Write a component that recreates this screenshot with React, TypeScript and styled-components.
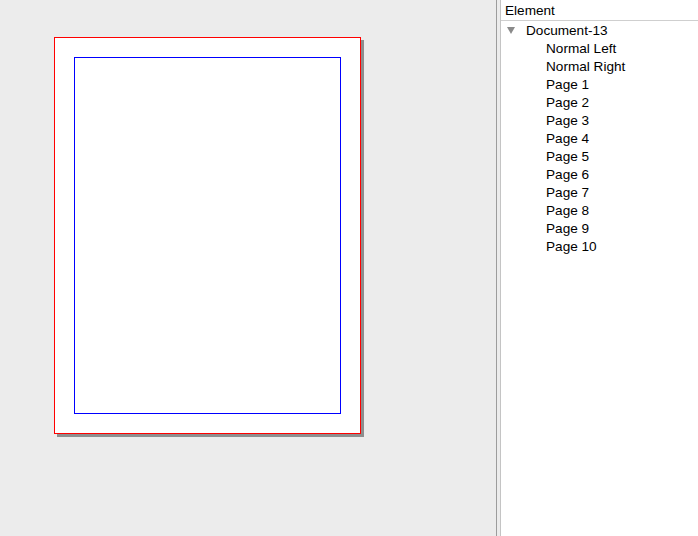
import React from "react";
import styled, { createGlobalStyle } from "styled-components";

const GlobalStyle = createGlobalStyle`
  html, body {
    margin: 0;
    padding: 0;
    background: #ececec;
  }
  body {
    font-family: "Liberation Sans", Arial, sans-serif;
  }
`;

const Window = styled.div`
  display: flex;
  width: 698px;
  height: 536px;
  overflow: hidden;
`;

const Canvas = styled.div`
  width: 496px;
  flex-shrink: 0;
  background: #ececec;
  padding: 37px 0 0 54px;
  box-sizing: border-box;
`;

const Sheet = styled.div`
  width: 307px;
  height: 397px;
  box-sizing: border-box;
  background: #ffffff;
  border: 1px solid #ff0000;
  padding: 19px;
  box-shadow: 3px 3px 0 #8e8e8e;
`;

const MarginBox = styled.div`
  width: 100%;
  height: 100%;
  box-sizing: border-box;
  border: 1px solid #0000ff;
`;

const Splitter = styled.div`
  width: 5px;
  flex-shrink: 0;
  box-sizing: border-box;
  background: #ececec;
  border-left: 1px solid #9c9c9c;
  border-right: 1px solid #c4c4c4;
`;

const Panel = styled.div`
  flex: 1;
  background: #ffffff;
  display: flex;
  flex-direction: column;
`;

const Header = styled.div`
  height: 21px;
  box-sizing: border-box;
  border-bottom: 1px solid #cfcfcf;
  padding: 2px 0 0 4px;
  font-size: 13.6px;
  line-height: 18px;
  color: #000;
`;

const Tree = styled.div``;

// top-level rows carry the disclosure triangle, nested rows are indented past it
const Row = styled.div<{ $indent: number }>`
  display: flex;
  align-items: center;
  height: 18px;
  padding-left: ${(p) => p.$indent}px;
  font-size: 13.6px;
  color: #000;
`;

const Disclosure = styled.span`
  width: 0;
  height: 0;
  border-left: 4px solid transparent;
  border-right: 4px solid transparent;
  border-top: 7px solid #8a8a8a;
  margin-right: 11px;
`;

const pages = [
  "Normal Left",
  "Normal Right",
  "Page 1",
  "Page 2",
  "Page 3",
  "Page 4",
  "Page 5",
  "Page 6",
  "Page 7",
  "Page 8",
  "Page 9",
  "Page 10",
];

const App = () => {
  return (
    <>
      <GlobalStyle />
      <Window>
        <Canvas>
          <Sheet>
            <MarginBox />
          </Sheet>
        </Canvas>
        <Splitter />
        <Panel>
          <Header>Element</Header>
          <Tree>
            <Row $indent={6}>
              <Disclosure />
              Document-13
            </Row>
            {pages.map((name) => (
              <Row key={name} $indent={45}>
                {name}
              </Row>
            ))}
          </Tree>
        </Panel>
      </Window>
    </>
  );
};

export default App;
